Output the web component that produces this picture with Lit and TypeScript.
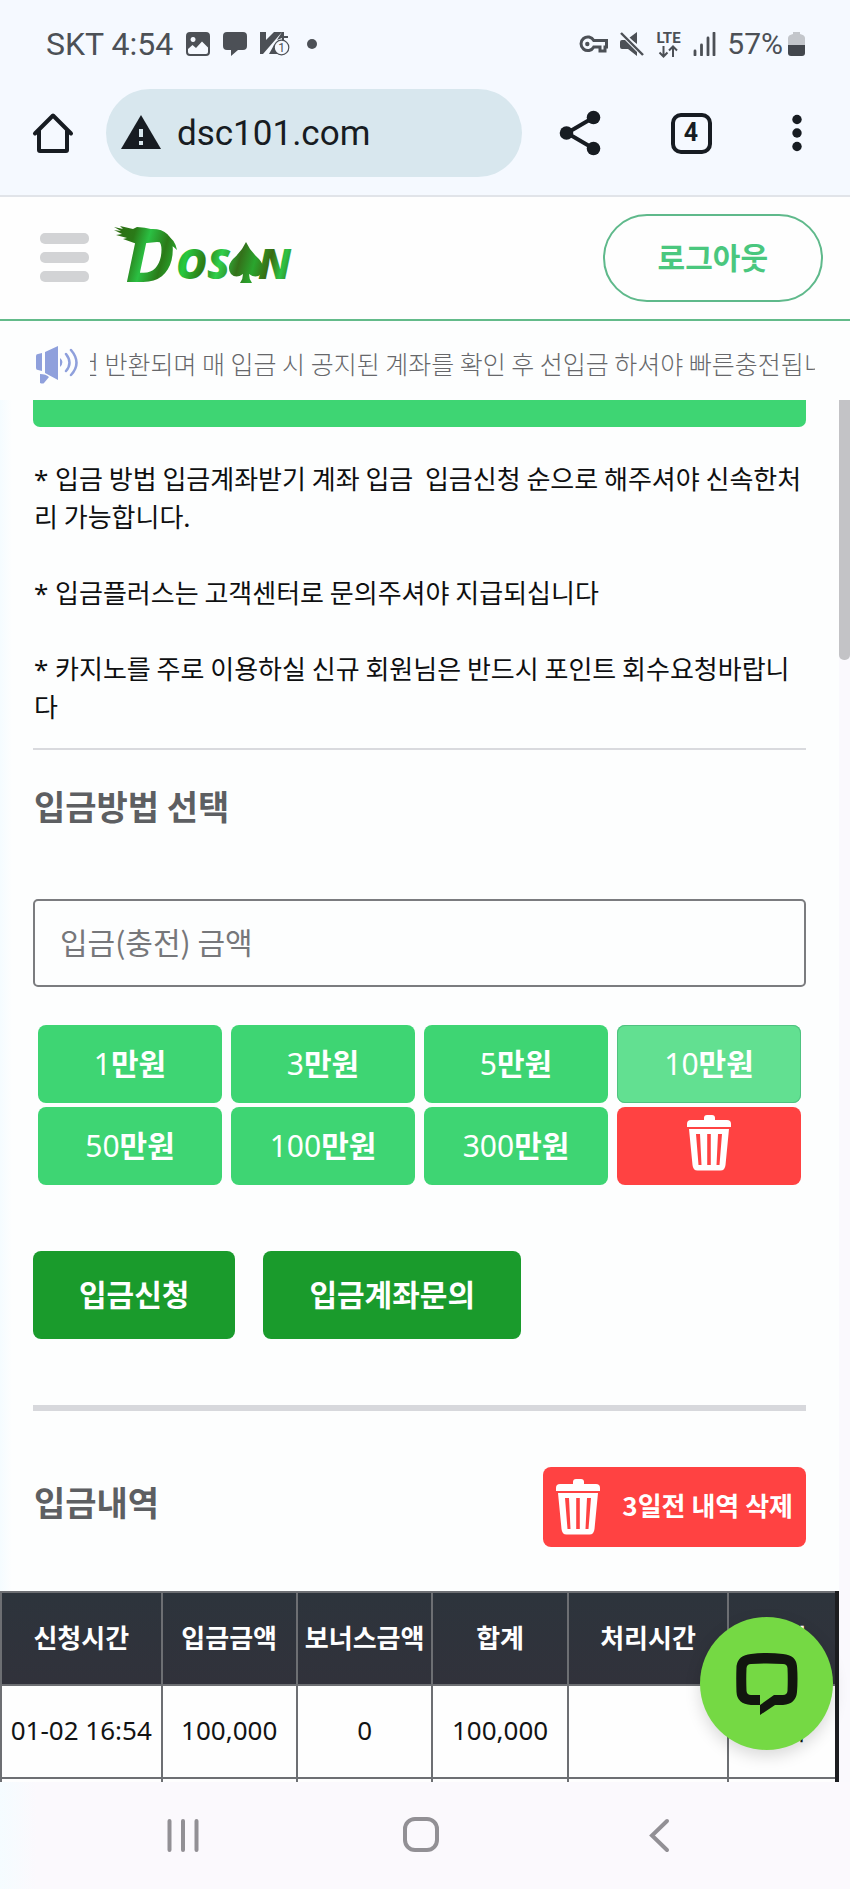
import { LitElement, html, css } from "lit";
import { customElement, property, state } from "lit/decorators.js";
import { classMap } from "lit/directives/class-map.js";

const trashIcon = html`<svg viewBox="0 0 44 56" width="44" height="56" aria-hidden="true">
  <path fill="#fff" d="M17 5V3q0-3 3-3h5q3 0 3 3v2z" />
  <path fill="#fff" d="M4 5h36q4 0 4 4v3H0V9q0-4 4-4z" />
  <path fill="#fff" fill-rule="evenodd" d="M2 14h40l-3.500 36q-.6 5.500-5 5.500h-23q-4.400 0-5-5.500z
    M9 19l2.500 31h3L13 19z M20.200 19v31h3.600V19z M31 19l-1.500 31h3L35 19z" />
</svg>`;

@customElement("status-bar")
class StatusBar extends LitElement {
  static styles = css`
    :host {
      display: flex;
      align-items: center;
      justify-content: space-between;
      height: 88px;
      padding: 0 45px 0 46px;
      color: #4c5056;
      font: 400 32px/40px Roboto, "Noto Sans CJK KR", sans-serif;
    }
    .side { display: flex; align-items: center; gap: 13px; }
    .right { gap: 11px; font-size: 30px; }
    svg { display: block; }
    .lte { font: 700 15px Roboto, sans-serif; }
    .battery { display: flex; align-items: center; gap: 5px; }
  `;
  render() {
    return html`
      <div class="side">
        <span>SKT 4:54</span>
        <svg width="24" height="24" viewBox="0 0 24 24">
          <path fill="#4c5056" fill-rule="evenodd" d="M4 0h16q4 0 4 4v16q0 4-4 4H4q-4 0-4-4V4q0-4 4-4z
            M2 17V20q0 2 2 2h16q2 0 2-2v-4.500L16 9.500 10 16 6.500 13z M7 5a2.500 2.500 0 1 0 .1 0z" />
        </svg>
        <svg width="24" height="24" viewBox="0 0 24 24">
          <path fill="#4c5056" d="M4 0h16q4 0 4 4v10q0 4-4 4h-5l-7 6v-6H4q-4 0-4-4V4q0-4 4-4z" />
        </svg>
        <svg width="30" height="26" viewBox="0 0 30 26">
          <path fill="#4c5056" d="M0 1h6v8L14 1h8L3 23H0z M9 23l5-9 4 9z M17 9l5-8h2v4h4v2h-4v3h-2V7z" />
          <circle cx="21.500" cy="16.500" r="7.300" fill="#f5f9ff" stroke="#4c5056" stroke-width="1.200" />
          <text x="21.500" y="21" text-anchor="middle" font-size="12" fill="#4c5056" font-family="Roboto">1</text>
        </svg>
        <svg width="24" height="24" viewBox="0 0 24 24"><circle cx="9" cy="12" r="5" fill="#4c5056" /></svg>
      </div>
      <div class="side right">
        <svg width="30" height="20" viewBox="0 0 30 20" fill="none" stroke="#4c5056" stroke-width="3">
          <path d="M14.800 6.500H27.500V13H26v4h-5v-4h-6.200A6.800 6.800 0 1 1 14.800 6.500z" />
          <circle cx="8.300" cy="10" r="2.200" fill="#4c5056" stroke="none" />
        </svg>
        <svg width="24" height="24" viewBox="0 0 24 24">
          <path fill="#4c5056" d="M0 10q0-2 2-2h3l12 12v4L8 17H2q-2 0-2-2z M9 6l8-6v12z" />
          <path d="M3 0l22 22" stroke="#f5f9ff" stroke-width="1.500" />
          <path d="M1 1l22 22" stroke="#4c5056" stroke-width="2.400" />
        </svg>
        <svg width="27" height="28" viewBox="0 0 27 28">
          <text class="lte" x="13.500" y="13" text-anchor="middle" fill="#4c5056">LTE</text>
          <path d="M8.500 16v10M4.500 22.500l4 4 4-4M18 27V17M14 20.500l4-4 4 4" fill="none" stroke="#4c5056" stroke-width="2" />
        </svg>
        <svg width="23" height="24" viewBox="0 0 23 24">
          <path d="M2 19v4M8.500 13v10M15 6v17M21 1v22" stroke="#4c5056" stroke-width="2.800" stroke-linecap="round" />
        </svg>
        <span class="battery">
          57%
          <svg width="17" height="26" viewBox="0 0 17 26">
            <path fill="#c3c6cb" d="M5 1h7v2q5 1 5 4v7H0V7q0-3 5-4z" />
            <path fill="#43474d" d="M0 14h17v8q0 3-3 3H3q-3 0-3-3z" />
          </svg>
        </span>
      </div>
    `;
  }
}

@customElement("browser-toolbar")
class BrowserToolbar extends LitElement {
  static styles = css`
    :host {
      display: flex;
      align-items: center;
      padding: 1px 0 18px;
      border-bottom: 2px solid #e1e4e9;
    }
    button {
      flex: none;
      display: flex;
      align-items: center;
      justify-content: center;
      height: 88px;
      width: 106px;
      padding: 0;
      border: 0;
      background: none;
      color: #171c22;
    }
    .share { width: 116px; }
    .address {
      flex: 1;
      min-width: 0;
      display: flex;
      align-items: center;
      gap: 15px;
      height: 88px;
      padding: 2px 28px 0 14px;
      border-radius: 44px;
      box-sizing: border-box;
      background: #d8e7ee;
    }
    .address input {
      flex: 1;
      min-width: 0;
      padding: 0;
      border: 0;
      outline: 0;
      background: none;
      color: #171c22;
      font: 400 35px/44px Roboto, sans-serif;
    }
    .warn { flex: none; margin-bottom: 4px; }
    .tabs {
      display: flex;
      align-items: center;
      justify-content: center;
      width: 41px;
      height: 41px;
      box-sizing: border-box;
      border: 4px solid #171c22;
      border-radius: 10px;
      font: 700 25px/32px Roboto, sans-serif;
    }
  `;
  render() {
    return html`
      <button aria-label="홈">
        <svg width="42" height="42" viewBox="0 0 42 42" fill="none" stroke="#171c22" stroke-width="4" stroke-linecap="round" stroke-linejoin="round">
          <path d="M3 21.500L21 3.500l18 18" />
          <path d="M7 19v19q0 1 1 1h26q1 0 1-1V19" />
        </svg>
      </button>
      <div class="address">
        <svg class="warn" width="42" height="36" viewBox="0 0 42 36" aria-hidden="true">
          <path fill="#171c22" d="M21 1l20 34H1z" />
          <path fill="#d8e7ee" d="M19 15h4v8h-4z M19 27h4v4h-4z" />
        </svg>
        <input aria-label="주소" .value=${"dsc101.com"} />
      </div>
      <button class="share" aria-label="공유">
        <svg width="42" height="46" viewBox="0 0 42 46">
          <path d="M34.500 7.500L8 23l26.500 15.500" fill="none" stroke="#171c22" stroke-width="4" />
          <circle cx="34.500" cy="7.500" r="6.800" fill="#171c22" />
          <circle cx="7.500" cy="23" r="6.800" fill="#171c22" />
          <circle cx="34.500" cy="38.500" r="6.800" fill="#171c22" />
        </svg>
      </button>
      <button aria-label="탭 4개"><span class="tabs">4</span></button>
      <button aria-label="더보기">
        <svg width="10" height="38" viewBox="0 0 10 38" fill="#171c22">
          <circle cx="5" cy="5.500" r="4.700" /><circle cx="5" cy="19" r="4.700" /><circle cx="5" cy="32.500" r="4.700" />
        </svg>
      </button>
    `;
  }
}

@customElement("site-header")
class SiteHeader extends LitElement {
  static styles = css`
    :host {
      display: flex;
      align-items: center;
      padding: 17px 27px 17px 40px;
      border-bottom: 2px solid #63bb8a;
      background: #fefefe;
    }
    .menu {
      display: flex;
      flex-direction: column;
      gap: 8px;
      padding: 0 0 2px;
      border: 0;
      background: none;
    }
    .menu i { width: 49px; height: 11px; border-radius: 5px; background: #d2d3d5; }
    .logo { display: block; margin-left: 24px; }
    .logo svg { display: block; overflow: visible; }
    .big { font: italic 700 74px/1 "Open Sans", sans-serif; }
    .small { font: italic 800 42px/1 "Open Sans", sans-serif; }
    .logout {
      margin-left: auto;
      height: 88px;
      padding: 0 53px 4px;
      border: 2px solid #5fb98b;
      border-radius: 44px;
      background: none;
      color: #4ac77e;
      font: 600 30px/44px "Noto Sans CJK KR", sans-serif;
    }
  `;
  render() {
    return html`
      <button class="menu" aria-label="메뉴"><i></i><i></i><i></i></button>
      <a class="logo" href="#" aria-label="DOSAN">
        <svg width="190" height="88" viewBox="0 -13 190 88">
          <defs>
            <linearGradient id="g" x1="0" y1="0" x2="180" y2="50" gradientUnits="userSpaceOnUse">
              <stop offset="0" stop-color="#2f6b12" /><stop offset=".12" stop-color="#2a7a18" />
              <stop offset=".2" stop-color="#2bc043" /><stop offset=".3" stop-color="#2a7a18" />
              <stop offset=".42" stop-color="#27c93f" /><stop offset=".52" stop-color="#2f7a14" />
              <stop offset=".6" stop-color="#2fd04c" /><stop offset=".7" stop-color="#34701a" />
              <stop offset=".78" stop-color="#2aa52e" /><stop offset=".86" stop-color="#3a6a12" />
              <stop offset=".93" stop-color="#2cc447" /><stop offset="1" stop-color="#3a6a12" />
            </linearGradient>
          </defs>
          <path fill="url(#g)" d="M1 0l9 2-3-3 13 3 4-2q16 1 28 7 10 5 12 16-8-8-20-8-10 1-20 2l-14-5 4-1-11-3 6-1-8-4 7 1z" />
          <text class="big" x="12" y="55" fill="url(#g)">D</text>
          <text class="small" x="63" y="52" fill="url(#g)">OS</text>
          <path fill="url(#g)" d="M133 15q4 9 13 17 7 8 2 15-5 5-12 0 0 5 3 9h-12q3-4 3-9-7 5-12 0-5-7 2-15 9-8 13-17z" />
          <text class="small" x="145" y="52" fill="url(#g)">N</text>
        </svg>
      </a>
      <button class="logout">로그아웃</button>
    `;
  }
}

@customElement("notice-ticker")
class NoticeTicker extends LitElement {
  @property({ type: Number }) offset = 0;
  static styles = css`
    :host {
      display: flex;
      align-items: center;
      gap: 10px;
      height: 79px;
      padding: 8px 35px 0;
      box-sizing: border-box;
      background: #fdfefe;
      color: #66676a;
      font: 300 25px/38px "Noto Sans CJK KR", sans-serif;
    }
    svg { flex: none; }
    .clip { flex: 1; min-width: 0; padding-bottom: 4px; overflow: hidden; white-space: nowrap; }
  `;
  render() {
    return html`
      <svg width="45" height="40" viewBox="0 0 45 40" aria-hidden="true">
        <path fill="#8fa0dc" d="M1 11q0-2 2-2l4-1v18l-4-1q-2 0-2-2z M10 7l13-6v34l-13-7z M5 29q6 0 9 3l-5 6q-1 1-4 0z M25 13q5 4 0 9z" />
        <path fill="none" stroke="#8fa0dc" stroke-width="2.500" stroke-linecap="round" d="M31 9q7 9 0 17M36 5q11 13 0 25" />
      </svg>
      <div class="clip"><span style="margin-left:${-this.offset}px">건 반환되며 매 입금 시 공지된 계좌를 확인 후 선입금 하셔야 빠른충전됩니다</span></div>
    `;
  }
}

@customElement("deposit-form")
class DepositForm extends LitElement {
  @state() private picked = 10;
  @state() private amount = "";
  private choices = [1, 3, 5, 10, 50, 100, 300];

  static styles = css`
    :host { display: block; }
    h2 {
      margin: 0;
      padding: 30px 0 67px 1px;
      color: #5d5f62;
      font: 600 34px/52px "Noto Sans CJK KR", sans-serif;
    }
    button {
      padding: 0;
      border: 0;
      border-radius: 8px;
      color: #fff;
      font: 600 30px/44px "Noto Sans", "Noto Sans CJK KR", sans-serif;
    }
    .amount {
      display: block;
      width: 100%;
      height: 88px;
      box-sizing: border-box;
      padding: 0 25px 4px;
      border: 2px solid #7b7c7f;
      border-radius: 5px;
      background: none;
      font: 400 30px/44px "Noto Sans CJK KR", sans-serif;
    }
    .amount::placeholder { color: #76777a; opacity: 1; }
    .choices {
      display: grid;
      grid-template-columns: repeat(4, 1fr);
      gap: 4px 9px;
      padding: 38px 5px 66px;
    }
    .choices button { height: 78px; background: #3ed573; }
    .choices .picked { background: #62e091; box-shadow: inset 0 0 0 1px #4fc280; }
    .choices .clear { background: #ff4242; padding-bottom: 6px; }
    .num { font-weight: 400; }
    .clear svg { display: block; margin: 0 auto; }
    .actions { display: flex; gap: 28px; padding-bottom: 66px; border-bottom: 6px solid #d7d8dc; }
    .actions button {
      height: 88px;
      padding: 0 46px;
      background: #1a9b2c;
    }
  `;
  render() {
    return html`
      <h2 id="method">입금방법 선택</h2>
      <input class="amount" aria-labelledby="method" placeholder="입금(충전) 금액" .value=${this.amount} />
      <div class="choices">
        ${this.choices.map(
          (n) => html`<button class=${classMap({ picked: n === this.picked })} @click=${() => { this.picked = n; this.amount = String(n * 10000); }}><span class="num">${n}</span>만원</button>`
        )}
        <button class="clear" aria-label="지우기" @click=${() => { this.amount = ""; }}>${trashIcon}</button>
      </div>
      <div class="actions"><button>입금신청</button><button>입금계좌문의</button></div>
    `;
  }
}

@customElement("deposit-history")
class DepositHistory extends LitElement {
  private rows = [
    ["01-02 16:54", "100,000", "0", "100,000", "", "대기"],
    ["", "", "", "", "", ""],
  ];
  static styles = css`
    :host { display: block; }
    header {
      display: flex;
      align-items: center;
      justify-content: space-between;
      padding: 56px 33px 44px 34px;
    }
    h2 { margin: 0 0 10px; color: #5d5f62; font: 600 34px/52px "Noto Sans CJK KR", sans-serif; }
    .delete {
      display: flex;
      align-items: center;
      gap: 22px;
      height: 80px;
      padding: 0 13px;
      border: 0;
      border-radius: 8px;
      background: #ff4242;
      color: #fff;
      font: 700 26px/38px "Noto Sans CJK KR", sans-serif;
    }
    .delete span { padding-bottom: 5px; }
    table {
      width: 100%;
      table-layout: fixed;
      border-collapse: collapse;
      border: 2px solid #6d6f73;
      border-right: 4px solid #1c1d20;
      color: #121314;
      text-align: center;
    }
    th, td {
      height: 91px;
      box-sizing: border-box;
      padding: 0 0 4px;
      border: 2px solid #6d6f73;
      white-space: nowrap;
    }
    thead tr, tbody tr { height: 93px; }
    th:last-child, td:last-child { border-right: 4px solid #1c1d20; }
    th {
      background: linear-gradient(#2d343c, #31323b);
      color: #fff;
      font: 700 26px/38px "Noto Sans CJK KR", sans-serif;
    }
    td { background: #fefefe; font: 400 26px/38px "Noto Sans", "Noto Sans CJK KR", sans-serif; }
    .time { width: 19.2%; }
    .money { width: 16.2%; }
  `;
  render() {
    return html`
      <header>
        <h2>입금내역</h2>
        <button class="delete">${trashIcon}<span>3일전 내역 삭제</span></button>
      </header>
      <table>
        <colgroup>
          <col class="time" /><col class="money" /><col class="money" /><col class="money" /><col class="time" /><col />
        </colgroup>
        <thead>
          <tr>${["신청시간", "입금금액", "보너스금액", "합계", "처리시간", "상태"].map((t) => html`<th scope="col">${t}</th>`)}</tr>
        </thead>
        <tbody>
          ${this.rows.map((r) => html`<tr>${r.map((c) => html`<td>${c}</td>`)}</tr>`)}
        </tbody>
      </table>
    `;
  }
}

@customElement("system-nav")
class SystemNav extends LitElement {
  static styles = css`
    :host {
      display: grid;
      grid-template-columns: repeat(3, 1fr);
      height: 107px;
      padding: 0 72px 2px 64px;
      box-sizing: border-box;
      background: linear-gradient(90deg, #f5fcff, #fbf9fd 36px);
    }
    button {
      display: flex;
      align-items: center;
      justify-content: center;
      padding: 0;
      border: 0;
      background: none;
    }
    svg { fill: none; stroke: #929095; stroke-width: 4; stroke-linecap: round; }
  `;
  render() {
    return html`
      <button aria-label="최근 앱"><svg width="36" height="36" viewBox="0 0 36 36"><path d="M4.500 4v29M18 4v29M31.500 4v29" /></svg></button>
      <button aria-label="홈"><svg width="38" height="38" viewBox="0 0 38 38"><rect x="3" y="3" width="32" height="31" rx="10" /></svg></button>
      <button aria-label="뒤로"><svg width="24" height="36" viewBox="0 0 24 36"><path d="M20 4L5 18.500 20 33" /></svg></button>
    `;
  }
}

@customElement("app-root")
class AppRoot extends LitElement {
  private guide = [
    "입금 방법 입금계좌받기 계좌 입금  입금신청 순으로 해주셔야 신속한처리 가능합니다.",
    "입금플러스는 고객센터로 문의주셔야 지급되십니다",
    "카지노를 주로 이용하실 신규 회원님은 반드시 포인트 회수요청바랍니다",
  ];
  static styles = css`
    :host {
      display: flex;
      flex-direction: column;
      height: 100vh;
      overflow: hidden;
      background: #f5f9ff;
    }
    .page {
      flex: 1;
      min-height: 0;
      position: relative;
      display: flex;
      background: #fdfefe;
    }
    .content {
      flex: 1;
      min-width: 0;
      overflow: hidden;
      background: linear-gradient(90deg, #f5fcff, #fdfefe 12px);
    }
    .rail { width: 11px; background: #faf9fd; }
    .thumb { height: 260px; border-radius: 0 0 5px 5px; background: #c3c3c6; }
    .inner { padding: 0 33px; }
    .banner { height: 27px; border-radius: 0 0 7px 7px; background: #3ed573; }
    .guide {
      display: grid;
      gap: 38px;
      padding: 32px 0 23px 1px;
      border-bottom: 2px solid #d9dade;
      color: #0e0f10;
      font: 400 26px/38px "Noto Sans CJK KR", sans-serif;
    }
    .guide p { margin: 0; white-space: pre-wrap; }
    .star { font-family: "Noto Sans", sans-serif; line-height: 1; }
    .chat {
      position: absolute;
      right: 17px;
      bottom: 32px;
      width: 133px;
      height: 133px;
      padding: 0;
      border: 0;
      border-radius: 50%;
      background: #75d944;
      box-shadow: 0 6px 16px #00000026;
    }
    .chat svg { display: block; margin: 0 auto; }
  `;
  render() {
    return html`
      <status-bar></status-bar>
      <browser-toolbar></browser-toolbar>
      <site-header></site-header>
      <notice-ticker offset="14"></notice-ticker>
      <main class="page">
        <div class="content">
          <div class="inner">
            <div class="banner"></div>
            <div class="guide">${this.guide.map((t) => html`<p><span class="star">* </span>${t}</p>`)}</div>
            <deposit-form></deposit-form>
          </div>
          <deposit-history></deposit-history>
        </div>
        <div class="rail"><div class="thumb"></div></div>
        <button class="chat" aria-label="채팅 상담">
          <svg width="62" height="62" viewBox="0 0 62 62">
            <path fill="#12160f" fill-rule="evenodd" d="M15 1Q31-1 47 1 60 2 61 13 62 26 61 39 60 51 47 52H39L24 62V42H15Q11 42 10.500 38 10 26 10.500 15 11 11 15 11 31 10 47 11 51 11 51.500 15 52 26 51.500 38 51 42 47 42H38L24 52H15Q1 51 .5 39 0 26 .5 13 2 2 15 1z" />
          </svg>
        </button>
      </main>
      <system-nav></system-nav>
    `;
  }
}
